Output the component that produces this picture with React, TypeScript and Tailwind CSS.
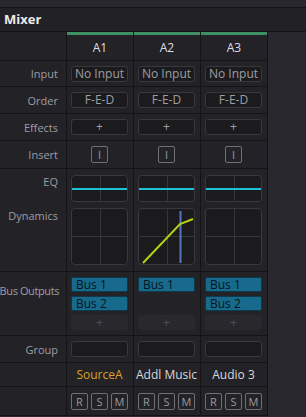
import React from "react";

type Col = {
  id: string;
  track: string;
  trackColor: string;
  buses: string[];
  dyn: boolean;
};

const cols: Col[] = [
  { id: "A1", track: "SourceA", trackColor: "text-[#dba322]", buses: ["Bus 1", "Bus 2"], dyn: false },
  { id: "A2", track: "Addl Music", trackColor: "text-[#d8d8da]", buses: ["Bus 1"], dyn: true },
  { id: "A3", track: "Audio 3", trackColor: "text-[#d8d8da]", buses: ["Bus 1", "Bus 2"], dyn: false },
];

const Row: React.FC<{
  label?: string;
  rowClass: string;
  labelClass?: string;
  cellClass?: string;
  render: (c: Col) => React.ReactNode;
}> = ({ label, rowClass, labelClass = "items-center pr-[8px]", cellClass = "items-center", render }) => (
  <div className={`flex ${rowClass}`}>
    <div
      className={`w-[67px] shrink-0 border-r border-[#141417] flex justify-end text-[11px] leading-[15px] text-[#9d9da3] whitespace-nowrap ${labelClass}`}
    >
      {label}
    </div>
    {cols.map((c) => (
      <div
        key={c.id}
        className={`w-[67px] shrink-0 border-r border-[#141417] flex flex-col px-[4px] pr-[5px] ${cellClass}`}
      >
        {render(c)}
      </div>
    ))}
  </div>
);

const Btn: React.FC<{ children?: React.ReactNode }> = ({ children }) => (
  <div className="w-full h-[16px] rounded-[3px] bg-[#1b1b1e] border border-[#38383d] flex items-center justify-center text-[12px] text-[#9e9ea2] leading-none">
    {children}
  </div>
);

const Square: React.FC<{ children: React.ReactNode }> = ({ children }) => (
  <div className="w-[17px] h-[17px] rounded-[2px] border border-[#6f6f74] flex items-center justify-center text-[11px] text-[#9a9a9e] leading-none">
    {children}
  </div>
);

const DynGraph: React.FC<{ active: boolean }> = ({ active }) => (
  <div className="w-full h-[57px] rounded-[4px] bg-[#1b1b1e] border border-[#38383d] relative overflow-hidden">
    <svg width="58" height="57" viewBox="0 0 58 57" className="absolute inset-0">
      <line x1="28.5" y1="0" x2="28.5" y2="57" stroke="#35353a" strokeWidth="1" />
      <line x1="0" y1="27.5" x2="58" y2="27.5" stroke="#35353a" strokeWidth="1" />
      {active && (
        <>
          <line x1="41.5" y1="2" x2="41.5" y2="54" stroke="#5874bf" strokeWidth="2" />
          <polyline
            points="4,54 41,15 54,10"
            fill="none"
            stroke="#b3d313"
            strokeWidth="2"
          />
        </>
      )}
    </svg>
  </div>
);

const App: React.FC = () => {
  return (
    <div
      className="w-[306px] h-[417px] overflow-hidden bg-[#29282e] text-[#d8d8da]"
      style={{ fontFamily: '"Open Sans", "Liberation Sans", sans-serif' }}
    >
      <div className="h-[8px] border-b border-[#141417]" />
      <div className="h-[24px] border-b border-[#141417] bg-[#222126] flex items-center pl-[4px] text-[13px] font-bold text-[#ececee]">
        Mixer
      </div>

      <div className="w-[268px] bg-[#232227]">
        {/* header */}
        <div className="flex h-[29px] border-b border-[#141417]">
          <div className="w-[67px] shrink-0 border-r border-[#141417]" />
          {cols.map((c) => (
            <div key={c.id} className="w-[67px] shrink-0 border-r border-[#141417] flex flex-col">
              <div className="h-[3px] bg-[#3f9165]" />
              <div className="flex-1 flex items-center justify-center text-[12px] text-[#dedee0]">
                {c.id}
              </div>
            </div>
          ))}
        </div>

        <Row label="Input" rowClass="h-[26px] border-b border-[#141417]" cellClass="justify-center" render={() => <Btn>No Input</Btn>} />
        <Row label="Order" rowClass="h-[27px] border-b border-[#141417]" cellClass="justify-center" render={() => <Btn>F-E-D</Btn>} />
        <Row label="Effects" rowClass="h-[27px] border-b border-[#141417]" cellClass="justify-center" render={() => <Btn>+</Btn>} />
        <Row
          label="Insert"
          rowClass="h-[28px] border-b border-[#141417]"
          cellClass="justify-center items-center"
          render={() => <Square>I</Square>}
        />
        <Row
          label="EQ"
          rowClass="h-[36px]"
          labelClass="items-start pt-[5px] pr-[8px]"
          cellClass="pt-[6px]"
          render={() => (
            <div className="w-full h-[27px] rounded-[4px] bg-[#1b1b1e] border border-[#38383d] relative">
              <div className="absolute left-[28px] top-0 bottom-0 w-px bg-[#35353a]" />
              <div className="absolute left-0 right-0 top-[12px] h-[2px] bg-[#1fc0d6]" />
            </div>
          )}
        />
        <Row
          label="Dynamics"
          rowClass="h-[67px] border-b border-[#141417]"
          labelClass="items-start pt-[3px] pr-[8px]"
          cellClass="pt-[3px]"
          render={(c) => <DynGraph active={c.dyn} />}
        />
        <Row
          label="Bus Outputs"
          rowClass="h-[64px] border-b border-[#141417]"
          labelClass="items-start pt-[11px] pr-[7px] tracking-[-0.4px]"
          cellClass="pt-[5px] gap-[4px]"
          render={(c) => (
            <>
              {[0, 1].map((i) =>
                c.buses[i] ? (
                  <div
                    key={i}
                    className="w-full h-[15px] rounded-[2px] bg-[#176a8c] border border-[#0d3a4d] flex items-center pl-[4px] text-[12px] leading-none text-[#08141b]"
                  >
                    {c.buses[i]}
                  </div>
                ) : (
                  <div key={i} className="w-full h-[15px]" />
                )
              )}
              <div className="w-full h-[15px] rounded-[2px] bg-[#29282d] flex items-center justify-center text-[12px] leading-none text-[#4e4e53]">
                +
              </div>
            </>
          )}
        />
        <Row
          label="Group"
          rowClass="h-[27px] border-b border-[#141417]"
          cellClass="justify-center"
          render={() => <Btn />}
        />
        <Row
          rowClass="h-[24px] border-b border-[#141417]"
          cellClass="justify-center items-center"
          render={(c) => (
            <span className={`text-[12px] whitespace-nowrap ${c.trackColor}`}>{c.track}</span>
          )}
        />
        <Row
          rowClass="h-[29px] border-b border-[#141417]"
          cellClass="flex-row justify-between items-center"
          render={() => (
            <>
              <Square>R</Square>
              <Square>S</Square>
              <Square>M</Square>
            </>
          )}
        />
      </div>
    </div>
  );
};

export default App;
